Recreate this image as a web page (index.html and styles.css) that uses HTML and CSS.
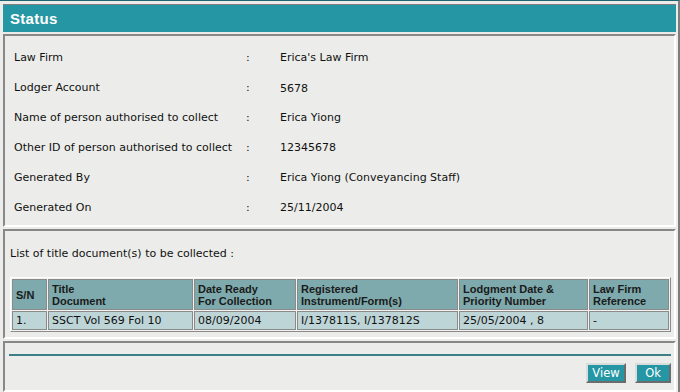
FILE: index.html
```html
<!DOCTYPE html>
<html>
<head>
<meta charset="utf-8">
<link rel="stylesheet" href="styles.css">
</head>
<body>
<div class="frame">
  <div class="title-bar">Status</div>

  <div class="panel info-panel">
    <div class="info-row"><span class="lbl">Law Firm</span><span class="colon">:</span><span class="val">Erica's Law Firm</span></div>
    <div class="info-row"><span class="lbl">Lodger Account</span><span class="colon">:</span><span class="val low">5678</span></div>
    <div class="info-row"><span class="lbl">Name of person authorised to collect</span><span class="colon">:</span><span class="val">Erica Yiong</span></div>
    <div class="info-row"><span class="lbl">Other ID of person authorised to collect</span><span class="colon">:</span><span class="val">12345678</span></div>
    <div class="info-row"><span class="lbl">Generated By</span><span class="colon">:</span><span class="val">Erica Yiong (Conveyancing Staff)</span></div>
    <div class="info-row"><span class="lbl">Generated On</span><span class="colon">:</span><span class="val">25/11/2004</span></div>
  </div>

  <div class="panel list-panel">
    <div class="list-caption">List of title document(s) to be collected :</div>
    <table class="doc-table">
      <colgroup>
        <col class="c-sn"><col class="c-title"><col class="c-date"><col class="c-reg"><col class="c-lodg"><col class="c-ref">
      </colgroup>
      <thead>
        <tr>
          <th>S/N</th>
          <th>Title<br>Document</th>
          <th>Date Ready<br>For Collection</th>
          <th>Registered<br>Instrument/Form(s)</th>
          <th>Lodgment Date &amp;<br>Priority Number</th>
          <th>Law Firm<br>Reference</th>
        </tr>
      </thead>
      <tbody>
        <tr>
          <td>1.</td>
          <td>SSCT Vol 569 Fol 10</td>
          <td>08/09/2004</td>
          <td>I/137811S, I/137812S</td>
          <td>25/05/2004 , 8</td>
          <td>-</td>
        </tr>
      </tbody>
    </table>
  </div>

  <div class="panel action-panel">
    <div class="rule"></div>
    <div class="buttons">
      <button class="btn btn-view">View</button>
      <button class="btn btn-ok">Ok</button>
    </div>
  </div>
</div>
</body>
</html>
```

FILE: styles.css
```css
html, body {
  margin: 0;
  padding: 0;
}

body {
  background: #ecedea;
  font-family: "DejaVu Sans", Verdana, sans-serif;
  font-size: 11px;
  color: #111;
  width: 680px;
  height: 392px;
  overflow: hidden;
}

.frame {
  box-sizing: border-box;
  width: 680px;
  height: 392px;
  border-top: 1px solid #1b6670;
  border-right: 2px solid #7d7d7d;
  padding: 3px 2px 0 3px;
  display: flex;
  flex-direction: column;
}

.title-bar {
  height: 27px;
  border-top: 1px solid #7f7f7f;
  background: #2596a3;
  color: #fff;
  font-family: "Liberation Sans", Arial, sans-serif;
  font-weight: bold;
  font-size: 15px;
  letter-spacing: 0.3px;
  line-height: 27px;
  padding-left: 7px;
}

.panel {
  border: 2px solid;
  border-color: #888 #fff #fff #888;
  margin-top: 2px;
}

.info-panel {
  box-sizing: border-box;
  height: 193px;
  padding: 6px 0 0 9px;
}

.info-row {
  display: grid;
  grid-template-columns: 231px 35px 1fr;
  height: 30px;
  align-items: center;
  white-space: nowrap;
}

.colon {
  padding-left: 1px;
}

.val.low {
  padding-top: 3px;
}

.list-panel {
  box-sizing: border-box;
  height: 110px;
  padding: 16px 0 0 3px;
}

.list-caption {
  height: 31px;
  padding-left: 2px;
}

.doc-table {
  border-collapse: separate;
  border-spacing: 1px;
  border: 1px solid;
  border-color: #fff #8a8a8a #8a8a8a #fff;
  background: #f2f3f1;
  width: 661px;
  margin-left: 2px;
  margin-top: -1px;
  table-layout: fixed;
}

.c-sn { width: 35px; }
.c-title { width: 145px; }
.c-date { width: 102px; }
.c-reg { width: 161px; }
.c-lodg { width: 129px; }
.c-ref { width: auto; }

.doc-table th,
.doc-table td {
  border: 1px solid #8a8a8a;
  text-align: left;
  padding: 0 3px;
  white-space: nowrap;
  overflow: hidden;
}

.doc-table th {
  background: #7eaaad;
  font-family: "Liberation Sans", Arial, sans-serif;
  font-weight: bold;
  font-size: 11px;
  line-height: 12px;
  height: 29px;
  color: #1a1a1a;
}

.doc-table td {
  background: #bed5d8;
  height: 17px;
  line-height: 17px;
}

.action-panel {
  flex: 1;
  box-sizing: border-box;
  padding: 11px 3px 0 4px;
}

.rule {
  height: 2px;
  background: #3d7f87;
}

.buttons {
  display: flex;
  justify-content: flex-end;
  gap: 9px;
  margin-top: 7px;
}

.btn {
  background: #2596a3;
  color: #fff;
  font-family: "DejaVu Sans", Verdana, sans-serif;
  font-size: 11.5px;
  height: 20px;
  padding: 0;
  border: 2px solid;
  border-color: #d8dcda #6c6c6c #6c6c6c #d8dcda;
  line-height: 15px;
}

.btn-view { width: 40px; }
.btn-ok { width: 36px; }
```
